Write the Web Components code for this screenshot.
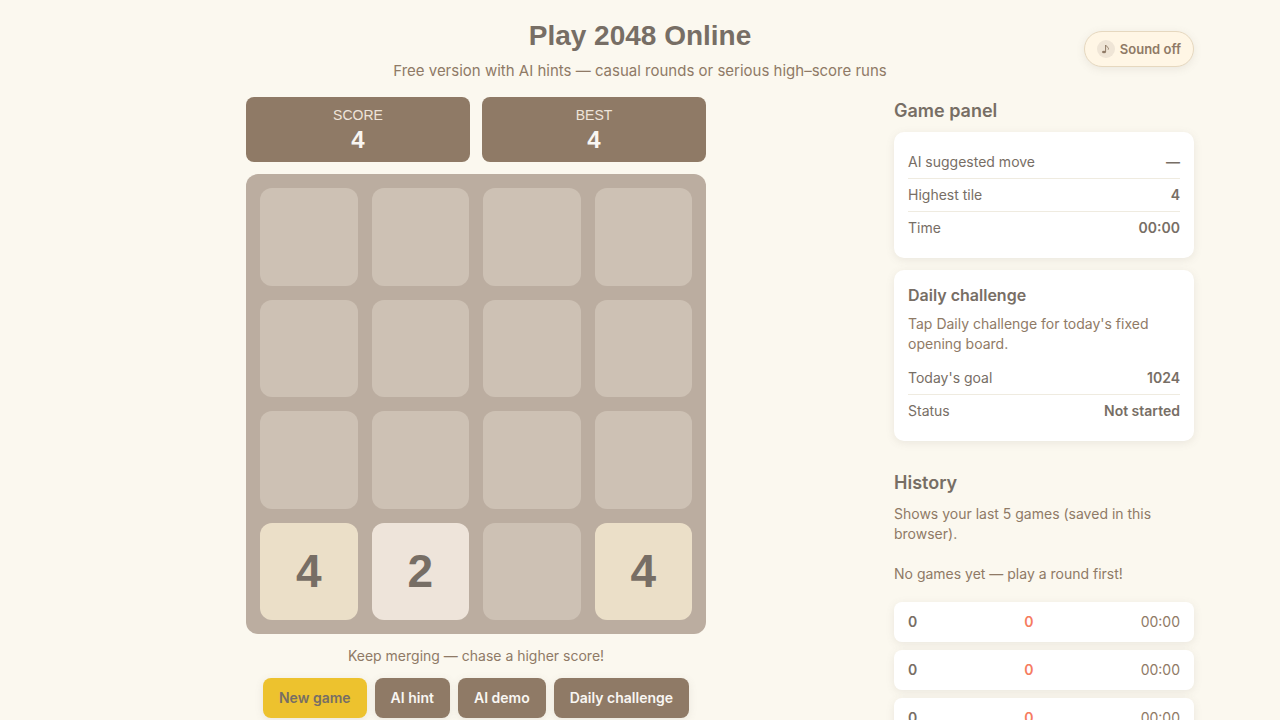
<!DOCTYPE html>
<html lang="en">
<head>
<meta charset="UTF-8">
<meta name="viewport" content="width=device-width, initial-scale=1">
<title>Play 2048 Online</title>
<style>
    body {
        --text: #776e65;
        --brown: #8f7a66;
        --shadow: 0 2px 8px rgba(119, 110, 101, 0.12);
        --display: "Liberation Sans", Arial, sans-serif;
        margin: 0;
        background: #fbf8ef;
        color: var(--text);
        font: 14px/20px Inter, "Liberation Sans", sans-serif;
    }
</style>
</head>
<body>
<game-app></game-app>

<script>
class GameApp extends HTMLElement {
    constructor() {
        super();
        this.attachShadow({ mode: 'open' });
    }

    connectedCallback() {
        this.shadowRoot.innerHTML = `
            <style>
                :host { display: block; max-width: 1108px; margin: 0 auto; padding: 16px; }
                header { display: grid; grid-template-columns: 1fr auto 1fr; align-items: center; margin-bottom: 16px; }
                .heading { grid-column: 2; text-align: center; }
                h1 { margin: 0 0 4px; font-family: var(--display); font-size: 28px; line-height: 40px; font-weight: 700; }
                header p { margin: 0; font-size: 15px; line-height: 21px; color: var(--brown); }
                sound-toggle { justify-self: end; }
                main { display: grid; grid-template-columns: minmax(0, 1fr) 300px; gap: 28px; align-items: start; }
                .play { width: 100%; max-width: 460px; justify-self: center; }
                .scores { display: grid; grid-template-columns: 1fr 1fr; gap: 12px; margin-bottom: 12px; }
                .status { margin: 12px 0; text-align: center; color: var(--brown); }
                .controls { display: flex; flex-wrap: wrap; justify-content: center; gap: 8px; }
                h2 { margin: 0 0 8px; font-size: 18px; line-height: 27px; font-weight: 600; }
                .note { margin: 0; color: var(--brown); }
                .note + .note { margin: 20px 0 18px; }
                info-card { margin-bottom: 12px; }
                .history { margin-top: 28px; }
                @media (max-width: 900px) {
                    main { grid-template-columns: minmax(0, 1fr); }
                }
            </style>
            <header>
                <div class="heading">
                    <h1>Play 2048 Online</h1>
                    <p>Free version with AI hints — casual rounds or serious high–score runs</p>
                </div>
                <sound-toggle></sound-toggle>
            </header>
            <main>
                <section class="play">
                    <div class="scores">
                        <score-box label="SCORE">4</score-box>
                        <score-box label="BEST">4</score-box>
                    </div>
                    <game-board tiles="0,0,0,0,0,0,0,0,0,0,0,0,4,2,0,4"></game-board>
                    <p class="status">Keep merging — chase a higher score!</p>
                    <div class="controls">
                        <game-button variant="primary">New game</game-button>
                        <game-button>AI hint</game-button>
                        <game-button>AI demo</game-button>
                        <game-button>Daily challenge</game-button>
                    </div>
                </section>
                <aside>
                    <h2>Game panel</h2>
                    <info-card>
                        <info-row label="AI suggested move">—</info-row>
                        <info-row label="Highest tile">4</info-row>
                        <info-row label="Time">00:00</info-row>
                    </info-card>
                    <info-card heading="Daily challenge" text="Tap Daily challenge for today's fixed opening board.">
                        <info-row label="Today's goal">1024</info-row>
                        <info-row label="Status">Not started</info-row>
                    </info-card>
                    <section class="history">
                        <h2>History</h2>
                        <p class="note">Shows your last 5 games (saved in this browser).</p>
                        <p class="note">No games yet — play a round first!</p>
                        <history-list count="5"></history-list>
                    </section>
                </aside>
            </main>
        `;
    }
}

class SoundToggle extends HTMLElement {
    constructor() {
        super();
        this.attachShadow({ mode: 'open' });
    }

    connectedCallback() {
        this.shadowRoot.innerHTML = `
            <style>
                :host { display: block; }
                button { display: flex; align-items: center; gap: 5px; padding: 8px 12px; border: 1px solid #e6d8bf;
                    border-radius: 999px; background: #fff6e5; color: var(--brown); font: 600 13px/18px Inter, sans-serif;
                    box-shadow: var(--shadow); cursor: pointer; }
                .icon { display: grid; place-items: center; width: 18px; height: 18px; border-radius: 50%; background: #efe5d6; }
                svg { display: block; }
            </style>
            <button type="button" aria-pressed="false">
                <span class="icon">
                    <svg width="10" height="10" viewBox="0 0 10 10" aria-hidden="true">
                        <ellipse cx="3" cy="8" rx="2" ry="1.3" fill="#8f7a66"/>
                        <path d="M4.6 8V1C5 2.8 8.4 3 7.2 5.6" fill="none" stroke="#8f7a66" stroke-width="1"/>
                    </svg>
                </span>
                <span class="label">Sound off</span>
            </button>
        `;
        this.shadowRoot.querySelector('button').addEventListener('click', (e) => {
            const on = e.currentTarget.getAttribute('aria-pressed') !== 'true';
            e.currentTarget.setAttribute('aria-pressed', on);
            this.shadowRoot.querySelector('.label').textContent = on ? 'Sound on' : 'Sound off';
        });
    }
}

class ScoreBox extends HTMLElement {
    constructor() {
        super();
        this.attachShadow({ mode: 'open' });
    }

    connectedCallback() {
        this.shadowRoot.innerHTML = `
            <style>
                :host { display: block; padding: 8px; border-radius: 8px; background: var(--brown); color: #f9f6f2; text-align: center; }
                .label { font-family: var(--display); line-height: 20px; color: #eee4da; }
                .value { font-family: var(--display); font-size: 24px; line-height: 29px; font-weight: 700; }
            </style>
            <div class="label">${this.getAttribute('label')}</div>
            <div class="value"><slot></slot></div>
        `;
    }
}

class GameBoard extends HTMLElement {
    constructor() {
        super();
        this.attachShadow({ mode: 'open' });
    }

    connectedCallback() {
        const tiles = this.getAttribute('tiles').split(',').map(Number);
        this.shadowRoot.innerHTML = `
            <style>
                :host { display: grid; grid-template-columns: repeat(4, 1fr); gap: 14px; padding: 14px;
                    border-radius: 12px; background: #bbada0; }
                .cell { display: grid; place-items: center; aspect-ratio: 1; border-radius: 12px; background: #cdc1b4;
                    font-family: var(--display); font-size: 46px; line-height: 52px; font-weight: 700; }
                .v2 { background: #eee4da; }
                .v4 { background: #ebdfc8; }
            </style>
            ${tiles.map(v => `<div class="cell v${v}">${v || ''}</div>`).join('')}
        `;
    }
}

class GameButton extends HTMLElement {
    constructor() {
        super();
        this.attachShadow({ mode: 'open' });
    }

    connectedCallback() {
        this.shadowRoot.innerHTML = `
            <style>
                :host { display: block; }
                button { padding: 10px 16px; border: 0; border-radius: 8px; background: var(--brown); color: #f9f6f2;
                    font: 600 14px/20px Inter, sans-serif; box-shadow: var(--shadow); cursor: pointer; display: block; }
                :host([variant="primary"]) button { background: #edc22e; color: var(--text); }
            </style>
            <button type="button"><slot></slot></button>
        `;
    }
}

class InfoCard extends HTMLElement {
    constructor() {
        super();
        this.attachShadow({ mode: 'open' });
    }

    connectedCallback() {
        const heading = this.getAttribute('heading');
        const text = this.getAttribute('text');
        this.shadowRoot.innerHTML = `
            <style>
                :host { display: block; padding: 14px; border-radius: 10px; background: #fff; box-shadow: var(--shadow); }
                h3 { margin: 0 0 8px; font-size: 16px; line-height: 22px; font-weight: 600; }
                p { margin: 0 0 8px; color: var(--brown); }
            </style>
            ${heading ? `<h3>${heading}</h3>` : ''}
            ${text ? `<p>${text}</p>` : ''}
            <slot></slot>
        `;
    }
}

class InfoRow extends HTMLElement {
    constructor() {
        super();
        this.attachShadow({ mode: 'open' });
    }

    connectedCallback() {
        this.shadowRoot.innerHTML = `
            <style>
                :host { display: flex; justify-content: space-between; padding: 6px 0; border-bottom: 1px solid #efebe0; }
                :host(:last-of-type) { border-bottom: 0; }
                strong { font-weight: 600; }
            </style>
            <span>${this.getAttribute('label')}</span>
            <strong><slot></slot></strong>
        `;
    }
}

class HistoryList extends HTMLElement {
    constructor() {
        super();
        this.attachShadow({ mode: 'open' });
    }

    connectedCallback() {
        const row = '<li><b>0</b><b class="tile">0</b><span>00:00</span></li>';
        this.shadowRoot.innerHTML = `
            <style>
                :host { display: block; }
                ul { display: grid; gap: 8px; margin: 0; padding: 0; list-style: none; }
                li { display: flex; justify-content: space-between; padding: 10px 14px; border-radius: 8px;
                    background: #fff; box-shadow: var(--shadow); }
                b { font-weight: 600; }
                .tile { color: #f67c5f; }
                span { color: var(--brown); }
            </style>
            <ul>${row.repeat(Number(this.getAttribute('count')))}</ul>
        `;
    }
}

customElements.define('game-app', GameApp);
customElements.define('sound-toggle', SoundToggle);
customElements.define('score-box', ScoreBox);
customElements.define('game-board', GameBoard);
customElements.define('game-button', GameButton);
customElements.define('info-card', InfoCard);
customElements.define('info-row', InfoRow);
customElements.define('history-list', HistoryList);
</script>
</body>
</html>
